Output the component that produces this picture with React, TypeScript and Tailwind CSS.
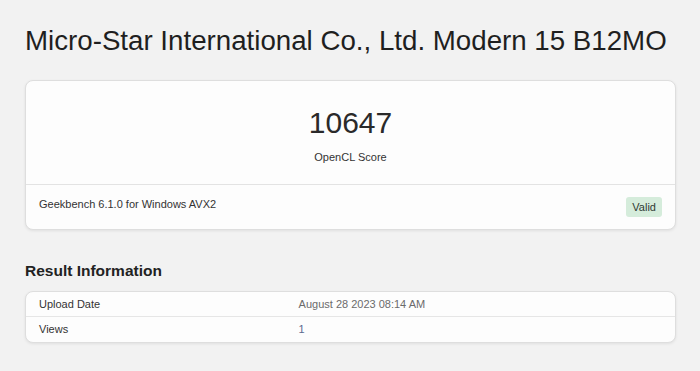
const font = { fontFamily: '"Liberation Sans", Arial, sans-serif' };

const info = [
    { label: 'Upload Date', value: 'August 28 2023 08:14 AM', tone: 'text-[#6b6b6b]' },
    { label: 'Views', value: '1', tone: 'text-[#5d6a8f]' },
];

export default function App() {
    return (
        <div className="min-h-[371px] bg-[#f2f2f2] pr-[24px] pl-[25px] text-[#222]" style={font}>
            {/* Header */}
            <h1 className="pt-[24px] text-[27.7px] leading-[1.2] font-normal text-[#1f1f1f]">
                Micro-Star International Co., Ltd. Modern 15 B12MO
            </h1>

            {/* Score card */}
            <section className="mt-[23px] overflow-hidden rounded-lg border border-[#dedede] bg-[#fdfdfd] shadow-[0_1px_3px_rgba(0,0,0,0.08)]">
                <div className="flex flex-col items-center pt-[24px] pb-[19px]">
                    <div className="text-[30px] leading-[36px] text-[#2a2a2a]">10647</div>
                    <div className="mt-[8px] text-[11px] leading-[16px] text-[#333]">OpenCL Score</div>
                </div>
                <div className="flex items-start justify-between border-t border-[#e3e3e3] px-[13px] pt-[12px] pb-[12px]">
                    <span className="-mt-[1px] text-[11px] leading-[16px] text-[#333]">
                        Geekbench 6.1.0 for Windows AVX2
                    </span>
                    <span className="rounded-[3px] bg-[#d5ecdb] px-[6px] py-[2px] text-[11px] leading-[16px] text-[#2f3a33]">
                        Valid
                    </span>
                </div>
            </section>

            {/* Result information */}
            <h2 className="mt-[32px] text-[15.5px] leading-[1.2] font-bold text-[#222]">Result Information</h2>

            <section className="mt-[10px] overflow-hidden rounded-lg border border-[#dedede] bg-[#fdfdfd] shadow-[0_1px_3px_rgba(0,0,0,0.08)]">
                {info.map((row, i) => (
                    <div
                        key={row.label}
                        className={`grid h-[25px] grid-cols-[40%_60%] items-center text-[11px] leading-[16px] ${
                            i < info.length - 1 ? 'border-b border-[#e6e6e6]' : ''
                        }`}
                    >
                        <span className="px-[13px] text-[#333]">{row.label}</span>
                        <span className={`px-[13px] ${row.tone}`}>{row.value}</span>
                    </div>
                ))}
            </section>
        </div>
    );
}
